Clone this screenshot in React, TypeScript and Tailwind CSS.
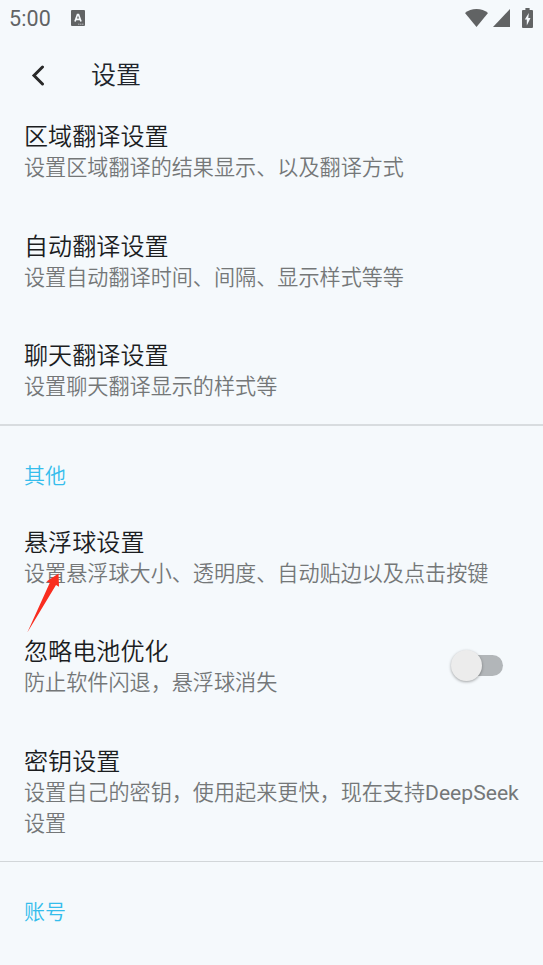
import type { ReactNode } from "react";
import { clsx } from "clsx";

type Item = { title: string; desc: ReactNode; arrow?: boolean; toggle?: boolean };

const translateItems: Item[] = [
  { title: "区域翻译设置", desc: "设置区域翻译的结果显示、以及翻译方式" },
  { title: "自动翻译设置", desc: "设置自动翻译时间、间隔、显示样式等等" },
  { title: "聊天翻译设置", desc: "设置聊天翻译显示的样式等" },
];

const otherItems: Item[] = [
  { title: "悬浮球设置", desc: "设置悬浮球大小、透明度、自动贴边以及点击按键", arrow: true },
  { title: "忽略电池优化", desc: "防止软件闪退，悬浮球消失", toggle: true },
  {
    title: "密钥设置",
    desc: (
      <>
        设置自己的密钥，使用起来更快，现在支持<span className="font-normal">DeepSeek</span>设置
      </>
    ),
  },
];

function StatusBar() {
  return (
    <div className="flex h-9 items-center pl-[9px] pr-[10px] font-normal text-[#616364]">
      <span className="w-[62px] pt-0.5 text-[21.5px] leading-[34px] tracking-[0.1px]">5:00</span>
      <svg className="h-4 w-[14px]" viewBox="0 0 14 16">
        <rect width="14" height="16" rx="1" fill="currentColor" />
        <path d="M4 11.500 6.500 4.500h1l2.500 7M5 9.300h4" fill="none" stroke="#f5f9fc" strokeWidth="1.700" />
        <path d="M7 14.200h6" stroke="#b4b7b9" strokeWidth="1" strokeDasharray="1.500 .5" />
      </svg>
      <div className="ml-auto flex items-center">
        <svg className="h-[18px] w-[23px]" viewBox="0 0 23 18" fill="currentColor">
          <path d="M0 3.900C3.200 1.300 7 0 11.500 0S19.800 1.300 23 3.900L11.500 18Z" />
        </svg>
        <svg className="ml-[5px] h-[18px] w-[17px]" viewBox="0 0 17 18" fill="currentColor">
          <path d="M17 0v18H0Z" />
        </svg>
        <svg className="ml-3 h-5 w-[11px]" viewBox="0 0 11 20">
          <path d="M3.400 0h4.200v2H10q1 0 1 1v16q0 1-1 1H1q-1 0-1-1V3q0-1 1-1h2.400Z" fill="currentColor" />
          <path d="M6.800 5 2.800 11.500h2V17.500L8.500 10H6.300Z" fill="#f5f9fc" />
        </svg>
      </div>
    </div>
  );
}

function Header() {
  return (
    <header className="flex h-[60px] items-start pl-[31px] pt-5">
      <svg className="mt-2 h-[22px] w-[14px]" viewBox="0 0 14 22">
        <path d="M11.500 3 3 11.500l8.500 8.500" fill="none" stroke="#292929" strokeWidth="3" strokeLinecap="round" />
      </svg>
      <h1 className="ml-[46px] text-[25px] leading-10 text-[#20242b]">设置</h1>
    </header>
  );
}

function Toggle() {
  return (
    <div className="relative mt-[13px] h-8 w-[52px] shrink-0 pl-[18px] pt-[5px]">
      <div className="h-[21px] w-[34px] rounded-r-full bg-[#b2b6b9]" />
      <div className="absolute left-0 top-0 size-[31px] rounded-full bg-[#ececec] shadow-[0_1px_3px_rgba(0,0,0,0.35)]" />
    </div>
  );
}

function SettingRow({ title, desc, arrow, toggle }: Item) {
  return (
    <div className="relative flex justify-between pb-[22.500px] pl-6 pr-5 pt-[26px]">
      <div>
        <h2 className="text-[24.100px] leading-[30px] text-[#1b1d1f]">{title}</h2>
        <p className="text-[21.120px] leading-[31px] text-[#747778]">{desc}</p>
      </div>
      {toggle && (
        <div className="mr-5">
          <Toggle />
        </div>
      )}
      {arrow && (
        <svg className="absolute left-[27px] top-[71px] h-[60px] w-[34px]" viewBox="0 0 34 60">
          <path d="M.3 59.500 22.800 9.700 19.500 8.500 31.500.5 32 13.700 29 12Z" fill="#f92d1f" />
        </svg>
      )}
    </div>
  );
}

function SectionTitle({ children, className }: { children: string; className?: string }) {
  return (
    <h3 className={clsx("pl-6 pt-[35px] text-[21px] leading-[31px] text-[#35bdec]", className)}>
      {children}
    </h3>
  );
}

export default function App() {
  return (
    <div className="h-[965px] w-full overflow-hidden bg-[#f5f9fc] font-['Roboto','Noto_Sans_CJK_SC',sans-serif] font-[350]">
      <StatusBar />
      <Header />
      {translateItems.map((item) => (
        <SettingRow key={item.title} {...item} />
      ))}
      <div className="-mt-[0.500px] h-0.5 bg-[#d8dcdf]" />
      <SectionTitle className="h-[75.500px]">其他</SectionTitle>
      {otherItems.map((item) => (
        <SettingRow key={item.title} {...item} />
      ))}
      <div className="h-px bg-[#d2d6d9]" />
      <SectionTitle>账号</SectionTitle>
    </div>
  );
}
